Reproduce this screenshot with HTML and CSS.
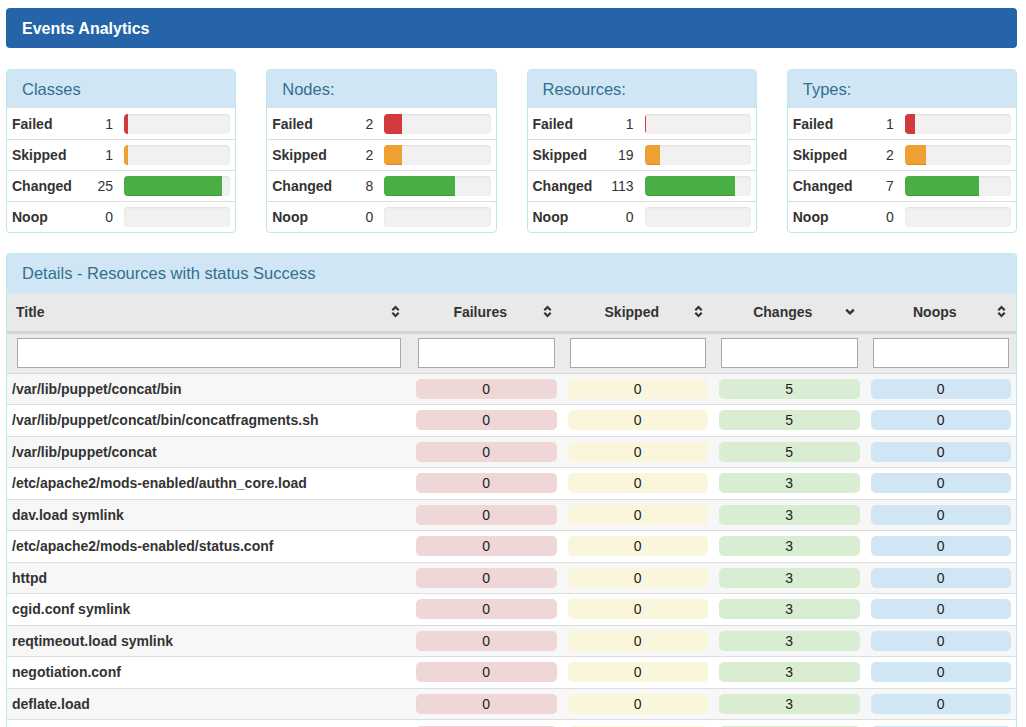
FILE: index.html
```html
<!DOCTYPE html>
<html>
<head>
<meta charset="utf-8">
<link rel="stylesheet" href="styles.css">
</head>
<body>
<div class="topbar">Events Analytics</div>

<div class="cards">
  <div class="card">
    <div class="card-head">Classes</div>
    <div class="stat"><span class="lbl">Failed</span><span class="num">1</span><div class="bar"><div class="fill red" style="width:3.7%"></div></div></div>
    <div class="stat"><span class="lbl">Skipped</span><span class="num">1</span><div class="bar"><div class="fill orange" style="width:3.7%"></div></div></div>
    <div class="stat"><span class="lbl">Changed</span><span class="num">25</span><div class="bar"><div class="fill green" style="width:92.6%"></div></div></div>
    <div class="stat"><span class="lbl">Noop</span><span class="num">0</span><div class="bar"></div></div>
  </div>
  <div class="card">
    <div class="card-head">Nodes:</div>
    <div class="stat"><span class="lbl">Failed</span><span class="num">2</span><div class="bar"><div class="fill red" style="width:16.7%"></div></div></div>
    <div class="stat"><span class="lbl">Skipped</span><span class="num">2</span><div class="bar"><div class="fill orange" style="width:16.7%"></div></div></div>
    <div class="stat"><span class="lbl">Changed</span><span class="num">8</span><div class="bar"><div class="fill green" style="width:66.7%"></div></div></div>
    <div class="stat"><span class="lbl">Noop</span><span class="num">0</span><div class="bar"></div></div>
  </div>
  <div class="card">
    <div class="card-head">Resources:</div>
    <div class="stat"><span class="lbl">Failed</span><span class="num">1</span><div class="bar"><div class="fill red" style="width:0.75%"></div></div></div>
    <div class="stat"><span class="lbl">Skipped</span><span class="num">19</span><div class="bar"><div class="fill orange" style="width:14.3%"></div></div></div>
    <div class="stat"><span class="lbl">Changed</span><span class="num">113</span><div class="bar"><div class="fill green" style="width:85%"></div></div></div>
    <div class="stat"><span class="lbl">Noop</span><span class="num">0</span><div class="bar"></div></div>
  </div>
  <div class="card">
    <div class="card-head">Types:</div>
    <div class="stat"><span class="lbl">Failed</span><span class="num">1</span><div class="bar"><div class="fill red" style="width:10%"></div></div></div>
    <div class="stat"><span class="lbl">Skipped</span><span class="num">2</span><div class="bar"><div class="fill orange" style="width:20%"></div></div></div>
    <div class="stat"><span class="lbl">Changed</span><span class="num">7</span><div class="bar"><div class="fill green" style="width:70%"></div></div></div>
    <div class="stat"><span class="lbl">Noop</span><span class="num">0</span><div class="bar"></div></div>
  </div>
</div>

<div class="details">
  <div class="details-head">Details - Resources with status Success</div>
  <table class="grid">
    <colgroup>
      <col class="c-title"><col class="c-num"><col class="c-num"><col class="c-num"><col class="c-num">
    </colgroup>
    <thead>
      <tr class="hrow">
        <th class="th-title"><div class="thc"><span class="thl left">Title</span><svg class="sort" width="9" height="13" viewBox="0 0 9 13"><path d="M1.3 5.2L4.5 2 7.7 5.2M1.3 7.8L4.5 11 7.7 7.8" fill="none" stroke="#333" stroke-width="2.2"/></svg></div></th>
        <th><div class="thc"><span class="thl">Failures</span><svg class="sort" width="9" height="13" viewBox="0 0 9 13"><path d="M1.3 5.2L4.5 2 7.7 5.2M1.3 7.8L4.5 11 7.7 7.8" fill="none" stroke="#333" stroke-width="2.2"/></svg></div></th>
        <th><div class="thc"><span class="thl">Skipped</span><svg class="sort" width="9" height="13" viewBox="0 0 9 13"><path d="M1.3 5.2L4.5 2 7.7 5.2M1.3 7.8L4.5 11 7.7 7.8" fill="none" stroke="#333" stroke-width="2.2"/></svg></div></th>
        <th><div class="thc"><span class="thl">Changes</span><svg class="sort" width="10" height="13" viewBox="0 0 10 13"><path d="M1.2 4.6L5 8.4 8.8 4.6" fill="none" stroke="#333" stroke-width="2.4"/></svg></div></th>
        <th><div class="thc"><span class="thl">Noops</span><svg class="sort" width="9" height="13" viewBox="0 0 9 13"><path d="M1.3 5.2L4.5 2 7.7 5.2M1.3 7.8L4.5 11 7.7 7.8" fill="none" stroke="#333" stroke-width="2.2"/></svg></div></th>
      </tr>
      <tr class="frow">
        <th class="f-title"><input type="text"></th>
        <th><input type="text"></th>
        <th><input type="text"></th>
        <th><input type="text"></th>
        <th><input type="text"></th>
      </tr>
    </thead>
    <tbody>
      <tr><td class="name">/var/lib/puppet/concat/bin</td><td><span class="b fail">0</span></td><td><span class="b skip">0</span></td><td><span class="b chg">5</span></td><td><span class="b noop">0</span></td></tr>
      <tr><td class="name">/var/lib/puppet/concat/bin/concatfragments.sh</td><td><span class="b fail">0</span></td><td><span class="b skip">0</span></td><td><span class="b chg">5</span></td><td><span class="b noop">0</span></td></tr>
      <tr><td class="name">/var/lib/puppet/concat</td><td><span class="b fail">0</span></td><td><span class="b skip">0</span></td><td><span class="b chg">5</span></td><td><span class="b noop">0</span></td></tr>
      <tr><td class="name">/etc/apache2/mods-enabled/authn_core.load</td><td><span class="b fail">0</span></td><td><span class="b skip">0</span></td><td><span class="b chg">3</span></td><td><span class="b noop">0</span></td></tr>
      <tr><td class="name">dav.load symlink</td><td><span class="b fail">0</span></td><td><span class="b skip">0</span></td><td><span class="b chg">3</span></td><td><span class="b noop">0</span></td></tr>
      <tr><td class="name">/etc/apache2/mods-enabled/status.conf</td><td><span class="b fail">0</span></td><td><span class="b skip">0</span></td><td><span class="b chg">3</span></td><td><span class="b noop">0</span></td></tr>
      <tr><td class="name">httpd</td><td><span class="b fail">0</span></td><td><span class="b skip">0</span></td><td><span class="b chg">3</span></td><td><span class="b noop">0</span></td></tr>
      <tr><td class="name">cgid.conf symlink</td><td><span class="b fail">0</span></td><td><span class="b skip">0</span></td><td><span class="b chg">3</span></td><td><span class="b noop">0</span></td></tr>
      <tr><td class="name">reqtimeout.load symlink</td><td><span class="b fail">0</span></td><td><span class="b skip">0</span></td><td><span class="b chg">3</span></td><td><span class="b noop">0</span></td></tr>
      <tr><td class="name">negotiation.conf</td><td><span class="b fail">0</span></td><td><span class="b skip">0</span></td><td><span class="b chg">3</span></td><td><span class="b noop">0</span></td></tr>
      <tr><td class="name">deflate.load</td><td><span class="b fail">0</span></td><td><span class="b skip">0</span></td><td><span class="b chg">3</span></td><td><span class="b noop">0</span></td></tr>
    </tbody>
  </table>
  <div class="tail"><span class="tb fail"></span><span class="tb skip"></span><span class="tb chg"></span><span class="tb noop"></span></div>
</div>
</body>
</html>
```

FILE: styles.css
```css
html, body {
  overflow: hidden;
}
body {
  margin: 0;
  padding: 8px 9px 0 6px;
  font-family: "Liberation Sans", Arial, sans-serif;
  font-size: 14px;
  color: #333;
  background: #fff;
}
.topbar {
  height: 40px;
  box-sizing: border-box;
  background: #2664a9;
  border-radius: 4px;
  color: #fff;
  font-weight: bold;
  font-size: 16px;
  line-height: 41px;
  padding-left: 16px;
}
.cards {
  display: grid;
  grid-template-columns: repeat(4, 1fr);
  column-gap: 30px;
  margin-top: 21px;
}
.card {
  border: 1px solid #bce8f1;
  border-radius: 4px;
  overflow: hidden;
}
.card-head {
  height: 38px;
  box-sizing: border-box;
  background: #d0e6f4;
  color: #31708f;
  font-size: 16.5px;
  line-height: 38px;
  padding-left: 15px;
  border-bottom: 1px solid #dcdcdc;
}
.stat {
  display: flex;
  align-items: center;
  height: 31px;
  box-sizing: border-box;
  padding: 0 5px 0 5px;
}
.stat + .stat {
  border-top: 1px solid #ddd;
}
.lbl {
  font-weight: bold;
  width: 78px;
}
.num {
  width: 23px;
  text-align: right;
  margin-right: 11px;
  font-size: 14px;
}
.bar {
  flex: 1;
  height: 20px;
  background: #f1f1f1;
  border-radius: 4px;
  overflow: hidden;
  box-shadow: inset 0 1px 2px rgba(0,0,0,0.08);
  display: flex;
}
.fill {
  height: 100%;
}
.fill.red { background: #d33a3d; }
.fill.orange { background: #efa033; box-shadow: inset 0 -1px 0 rgba(0,0,0,0.12); }
.fill.green { background: #49ae44; box-shadow: inset 0 -1px 0 rgba(0,0,0,0.12); }

.details {
  margin-top: 20px;
  border: 1px solid #bce8f1;
  border-bottom: none;
  border-radius: 4px 4px 0 0;
  overflow: hidden;
}
.details-head {
  height: 39px;
  box-sizing: border-box;
  background: #d0e6f4;
  color: #31708f;
  font-size: 16.5px;
  line-height: 39px;
  padding-left: 15px;
}
.grid {
  width: 100%;
  border-collapse: collapse;
  table-layout: fixed;
}
.c-title { width: 403px; }
.hrow th {
  background: #e9e9e9;
  height: 39px;
  padding: 0 10px 0 14px;
  border-bottom: 3px solid #d5d5d5;
  font-weight: bold;
  box-sizing: border-box;
}
.hrow th.th-title {
  padding-left: 9px;
}
.thc {
  display: flex;
  align-items: center;
  gap: 6px;
}
.thl {
  flex: 1;
  text-align: center;
}
.thl.left {
  text-align: left;
}
.sort {
  flex: none;
  display: block;
}
.frow th {
  background: #ebebeb;
  height: 39px;
  padding: 0 7px 0 8px;
  border-bottom: 1px solid #d8d8d8;
}
.frow th.f-title {
  padding: 0 9px 0 10px;
}
.frow input {
  display: block;
  width: 100%;
  height: 30px;
  box-sizing: border-box;
  border: 1px solid #a9a9a9;
  background: #fff;
  margin: 0;
  padding: 2px 4px;
}
.grid tbody td {
  height: 31.5px;
  padding: 0 5px 0 6px;
  border-bottom: 1px solid #ddd;
  box-sizing: border-box;
  text-align: center;
}
.grid tbody tr:nth-child(odd) td {
  background: #f7f7f7;
}
.grid tbody td.name {
  text-align: left;
  font-weight: bold;
  padding-left: 5px;
}
.b {
  display: block;
  height: 20px;
  line-height: 20px;
  border-radius: 5px;
  text-align: center;
  color: #222;
}
.b.fail { background: #efd7d7; }
.b.skip { background: #faf6dc; }
.b.chg { background: #d9edd3; }
.b.noop { background: #d1e6f4; }
.tail {
  display: grid;
  grid-template-columns: 403px 1fr 1fr 1fr 1fr;
  padding-top: 6px;
  height: 20px;
  background: #fff;
}
.tb {
  display: block;
  height: 20px;
  border-radius: 5px;
  margin: 0 5px 0 6px;
}
.tb.fail { grid-column: 2; background: #efd7d7; }
.tb.skip { background: #faf6dc; }
.tb.chg { background: #d9edd3; }
.tb.noop { background: #d1e6f4; }
```
